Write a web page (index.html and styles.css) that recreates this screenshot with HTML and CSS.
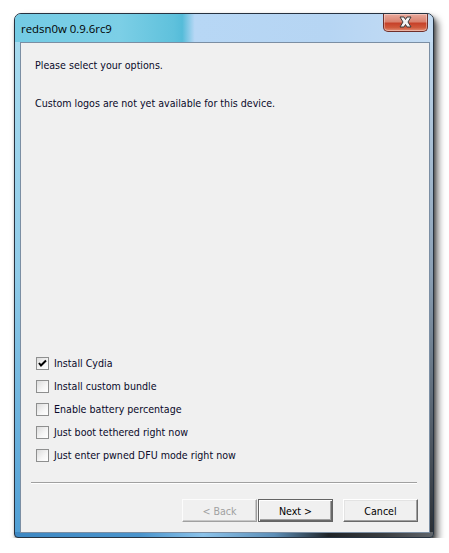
FILE: index.html
```html
<!DOCTYPE html>
<html>
<head>
<meta charset="utf-8">
<link rel="stylesheet" href="styles.css">
</head>
<body>
<div class="win">
  <div class="titlebar">
    <span class="title">redsn0w 0.9.6rc9</span>
    <div class="close">
      <svg width="45" height="18" viewBox="0 0 45 18">
        <path d="M17 4 L21 4 L22.5 6.5 L24 4 L28 4 L25 9 L28 14 L24 14 L22.5 11.5 L21 14 L17 14 L20 9 Z" fill="#f4f4f4" stroke="#3b3b3b" stroke-width="1" stroke-linejoin="round"/>
      </svg>
    </div>
  </div>
  <div class="client">
    <p class="msg first">Please select your options.</p>
    <p class="msg">Custom logos are not yet available for this device.</p>
    <div class="spacer"></div>
    <ul class="opts">
      <li class="opt"><span class="box checked"><svg width="11" height="11" viewBox="0 0 11 11"><path d="M2 5 L4 7.5 L9 2.5" fill="none" stroke="#000" stroke-width="2"/></svg></span>Install Cydia</li>
      <li class="opt"><span class="box"></span>Install custom bundle</li>
      <li class="opt"><span class="box"></span>Enable battery percentage</li>
      <li class="opt"><span class="box"></span>Just boot tethered right now</li>
      <li class="opt"><span class="box"></span>Just enter pwned DFU mode right now</li>
    </ul>
    <div class="sep"></div>
    <div class="buttons">
      <button class="btn disabled">&lt; Back</button>
      <button class="btn default">Next &gt;</button>
      <button class="btn cancel">Cancel</button>
    </div>
  </div>
</div>
</body>
</html>
```
FILE: styles.css
```css
html, body {
  margin: 0;
  padding: 0;
  background: #ffffff;
}
body {
  padding: 13px 0 0 14px;
  font-family: "DejaVu Sans Condensed", "DejaVu Sans", sans-serif;
}
.win {
  position: relative;
  width: 420px;
  height: 525px;
  box-sizing: border-box;
  border: 1px solid #263240;
  border-radius: 7px 7px 4px 4px;
  padding: 0 3px 4px 5px;
  display: flex;
  flex-direction: column;
  background:
    linear-gradient(90deg, #3d88c3 0%, #4a94cc 30%, #8cc3ea 45%, #5d8fb8 62%, #202428 75%, #3a3d40 88%, #60656a 100%) bottom / 100% 5px no-repeat,
    linear-gradient(180deg, #a9dcef 0%, #8fcbe8 50%, #4f9ed4 100%) left / 6px 100% no-repeat,
    linear-gradient(180deg, #c7e0f6 0%, #8a9fb4 50%, #2a2e33 100%) right / 4px 100% no-repeat,
    #a8d2ee;
  box-shadow: 4px 5px 7px rgba(0,0,0,0.6), 1px 2px 3px rgba(0,0,0,0.35);
}
.titlebar {
  height: 28px;
  margin: 0 -3px 0 -5px;
  padding-left: 6px;
  display: flex;
  align-items: center;
  border-radius: 6px 6px 0 0;
  background: linear-gradient(90deg, #74cbe4 0%, #7ccfe6 25%, #5fc1dc 38%, #55bcd9 40%, #b7d7f5 43%, #b6d5f3 75%, #c4dcf3 100%);
}
.title {
  font-family: "Open Sans", "Noto Sans", sans-serif;
  font-size: 11.4px;
  color: #000;
  padding-top: 1px;
}
.close {
  position: absolute;
  top: 0;
  right: 5px;
  width: 45px;
  height: 18px;
  box-sizing: border-box;
  border: 1px solid #6e2f2a;
  border-top: none;
  border-radius: 0 0 5px 5px;
  background: linear-gradient(180deg, #e9a99c 0%, #d9826f 45%, #c7422a 55%, #cf5a3c 80%, #e3917a 100%);
  box-shadow: inset 0 0 0 1px rgba(255,255,255,0.35);
}
.close svg { display: block; margin: -1px 0 0 -1px; }
.client {
  flex: 1;
  box-sizing: border-box;
  border: 1px solid #7b8ea3;
  background: #f0f0f0;
  display: flex;
  flex-direction: column;
  color: #0a0a2a;
  font-size: 10.6px;
  line-height: 13px;
}
.msg {
  margin: 0;
  padding-left: 14px;
}
.msg.first { margin-top: 16px; margin-bottom: 25px; }
.spacer { flex: 1; }
.opts {
  list-style: none;
  margin: 0 0 15px 0;
  padding: 0 0 0 15px;
}
.opt {
  display: flex;
  align-items: center;
  height: 23px;
}
.box {
  width: 13px;
  height: 13px;
  box-sizing: border-box;
  border: 1px solid #8e8f8f;
  background: linear-gradient(135deg, #dcdcdc 0%, #f6f6f6 60%, #ffffff 100%);
  margin-right: 5px;
  display: flex;
  align-items: center;
  justify-content: center;
}
.sep {
  height: 1px;
  background: #a0a0a0;
  border-bottom: 1px solid #ffffff;
  margin: 0 12px 15px 10px;
}
.buttons {
  display: flex;
  justify-content: flex-end;
  padding: 0 11px 10px 0;
}
.btn {
  width: 75px;
  height: 23px;
  box-sizing: border-box;
  font-family: inherit;
  font-size: 10.6px;
  color: #000;
  background: #f0f0f0;
  border: 1px solid;
  border-color: #ffffff #696969 #696969 #ffffff;
  box-shadow: inset -1px -1px 0 #a0a0a0, inset 1px 1px 0 #e3e3e3;
  padding: 0;
  margin: 0;
}
.btn.disabled {
  color: #a0a0a0;
  border-color: #fcfcfc #a0a0a0 #a0a0a0 #fcfcfc;
  box-shadow: inset -1px -1px 0 #c8c8c8;
  margin-right: 1px;
}
.btn.default {
  border: 1px solid #646464;
  box-shadow: inset 1px 1px 0 #ffffff, inset -1px -1px 0 #696969, inset -2px -2px 0 #a0a0a0;
}
.btn.cancel { margin-left: 10px; }
```
